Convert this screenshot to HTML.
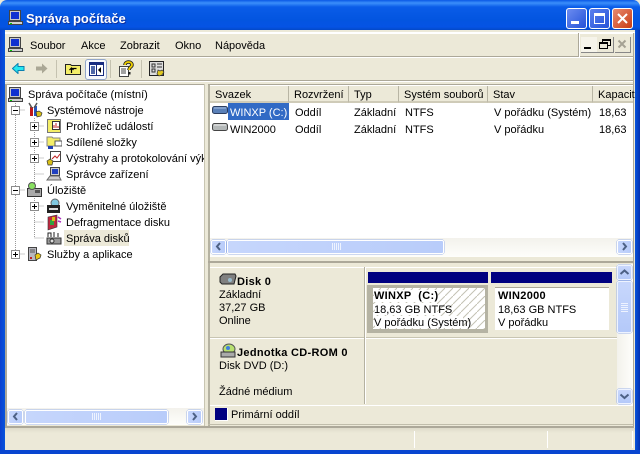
<!DOCTYPE html>
<html><head><meta charset="utf-8"><style>
html,body{margin:0;padding:0;background:#fff}
#w{position:relative;width:640px;height:454px;overflow:hidden;background:#ece9d8;font:11px "Liberation Sans",sans-serif;color:#000}
#w div,#w svg,#w span.t{position:absolute}
.t{white-space:nowrap;line-height:13px;margin-top:1px}
.b{font-weight:bold;letter-spacing:.3px}
.sb{background:linear-gradient(90deg,#c6d6fc,#b8ccfa);border:1px solid #fff;border-radius:2px;box-sizing:border-box;box-shadow:0 0 0 .5px #9db4e8}
.sbv{background:linear-gradient(180deg,#c8d7fc,#b4c9f9);border:1px solid #eef3ff;border-radius:2px;box-sizing:border-box;box-shadow:0 0 0 .5px #9db4e8}
.h{background:#ece9d8;border-bottom:2px solid #cfcbb8;border-right:1px solid #b8b5a4;box-sizing:border-box;height:17px;top:86px}
</style></head><body><div id="w">
<!-- frame -->
<div style="left:0;top:0;width:640px;height:30px;background:linear-gradient(180deg,#0a58e6 0,#3b8ffb 3px,#0a5ce8 7px,#0355e0 20px,#0553e4 27px,#0348c8 30px);border-radius:7px 7px 0 0"></div>
<div style="left:0;top:30px;width:5px;height:424px;background:linear-gradient(90deg,#0a3fd0,#0855dd)"></div>
<div style="left:635px;top:30px;width:5px;height:424px;background:linear-gradient(90deg,#0855dd,#0331b0)"></div>
<div style="left:0;top:450px;width:640px;height:4px;background:#0845d0"></div>
<div style="left:5px;top:32px;width:630px;height:1px;background:#fff"></div>
<!-- title -->
<svg style="left:7px;top:9px" width="16" height="17" viewBox="0 0 16 17"><rect x="2.500" y="1.500" width="11" height="10" fill="#c8c8c8" stroke="#444"/><rect x="4" y="3" width="8" height="7" fill="#1030d0"/><rect x="1.500" y="12.500" width="14" height="3" fill="#d0d0d0" stroke="#444"/><rect x="3" y="14" width="2" height="1" fill="#0c0"/></svg>
<span class="t" style="left:26px;top:11px;color:#fff;font-weight:bold;font-size:13px;text-shadow:1px 1px 0 #0f2fa0">Správa počítače</span>
<!-- window buttons -->
<div style="left:566px;top:8px;width:21px;height:21px;box-sizing:border-box;border:1px solid #fff;border-radius:3px;background:linear-gradient(135deg,#6c8cf0,#2452d8)"></div>
<div style="left:571px;top:21px;width:8px;height:3px;background:#fff"></div>
<div style="left:589px;top:8px;width:21px;height:21px;box-sizing:border-box;border:1px solid #fff;border-radius:3px;background:linear-gradient(135deg,#5c80ee,#2452d8)"></div>
<div style="left:594px;top:13px;width:11px;height:11px;box-sizing:border-box;border:1px solid #fff;border-top:3px solid #fff"></div>
<div style="left:612px;top:8px;width:21px;height:21px;box-sizing:border-box;border:1px solid #fff;border-radius:3px;background:linear-gradient(135deg,#e88a70,#c83c14)"></div>
<svg style="left:612px;top:8px" width="21" height="21"><path d="M6 6l9 9M15 6l-9 9" stroke="#fff" stroke-width="2"/></svg>
<!-- menu -->
<div style="left:5px;top:33px;width:629px;height:1px;background:#fff"></div>
<div style="left:5px;top:56px;width:629px;height:1px;background:#aca899"></div>
<div style="left:5px;top:57px;width:628px;height:1px;background:#fff"></div>
<div style="left:578px;top:33px;width:1px;height:24px;background:#aca899"></div>
<div style="left:579px;top:33px;width:1px;height:24px;background:#fff"></div>
<div style="left:633px;top:33px;width:1px;height:393px;background:#aca899"></div>
<svg style="left:7px;top:36px" width="16" height="17" viewBox="0 0 16 17"><rect x="2.500" y="1.500" width="11" height="10" fill="#c8c8c8" stroke="#444"/><rect x="4" y="3" width="8" height="7" fill="#1030d0"/><rect x="1.500" y="12.500" width="14" height="3" fill="#d0d0d0" stroke="#444"/><rect x="3" y="14" width="2" height="1" fill="#0c0"/></svg>
<span class="t" style="left:30px;top:39px">Soubor</span>
<span class="t" style="left:81px;top:39px">Akce</span>
<span class="t" style="left:120px;top:39px">Zobrazit</span>
<span class="t" style="left:175px;top:39px">Okno</span>
<span class="t" style="left:215px;top:39px">Nápověda</span>
<div style="left:581px;top:37px;width:16px;height:15px;background:#f6f4ea;border-right:1px solid #888;border-bottom:1px solid #888"></div>
<div style="left:584px;top:47px;width:7px;height:2px;background:#000"></div>
<div style="left:597px;top:37px;width:16px;height:15px;background:#ece9d8;border-right:1px solid #888;border-bottom:1px solid #888"></div>
<svg style="left:599px;top:39px" width="13" height="11"><path d="M3.500 3V.5h8v6H8.500M.5 3.500h8v6h-8z" fill="none" stroke="#000"/><path d="M1 4.500h7M4 1.500h7" stroke="#000"/></svg>
<div style="left:615px;top:37px;width:15px;height:15px;background:#ece9d8;border-right:1px solid #888;border-bottom:1px solid #888"></div>
<svg style="left:617px;top:39px" width="11" height="11"><path d="M1.500 1.500l7 7M8.500 1.500l-7 7" stroke="#a5a294" stroke-width="2"/></svg>
<!-- toolbar -->
<svg style="left:12px;top:63px" width="13" height="11"><path d="M.5 5.500L6 .5v3h6v4H6v3z" fill="#26e8f0" stroke="#0a80b0"/></svg>
<svg style="left:35px;top:63px" width="13" height="11"><path d="M12.500 5.500L7 .5v3H1v4h6v3z" fill="#aaa795"/></svg>
<div style="left:56px;top:60px;width:1px;height:18px;background:#c5c2b0"></div>
<svg style="left:64px;top:61px" width="18" height="16"><path d="M1.500 3.500h5l1 1h9v9h-15z" fill="#f4ee68" stroke="#222"/><path d="M7.500 12V8M5.500 9l2-2 2 2M7.500 7.500h5" fill="none" stroke="#000" stroke-width="1.200"/></svg>
<div style="left:85px;top:59px;width:22px;height:21px;box-sizing:border-box;border:1px solid #93a6c8;border-radius:3px;background:#f6f8fc"></div>
<svg style="left:89px;top:62px" width="15" height="14"><rect x=".5" y=".5" width="14" height="13" fill="#fff" stroke="#182c80"/><rect x="1" y="1" width="13" height="2" fill="#182c80"/><rect x="2" y="4" width="4" height="8" fill="#5068a8"/><path d="M7.500 3v10" stroke="#182c80"/><path d="M12 5v6L9 8z" fill="#000"/></svg>
<div style="left:110px;top:60px;width:1px;height:18px;background:#c5c2b0"></div>
<svg style="left:118px;top:60px" width="17" height="18"><path d="M1.500 6.500h9v10h-9z" fill="#fff" stroke="#444"/><path d="M3 9h5M3 11h5M3 13h5" stroke="#444"/><path d="M7 5c0-4 7-4 7 0 0 2-3 2-3 5" fill="none" stroke="#222" stroke-width="3.500"/><path d="M7 5c0-4 7-4 7 0 0 2-3 2-3 5" fill="none" stroke="#f0d000" stroke-width="1.800"/><rect x="10" y="12" width="2.500" height="2.500" fill="#222"/></svg>
<div style="left:141px;top:60px;width:1px;height:18px;background:#c5c2b0"></div>
<svg style="left:149px;top:61px" width="17" height="16"><rect x=".5" y=".5" width="14" height="14" fill="#ddd" stroke="#222"/><path d="M3 3h3v3H3zM8 3h5M3 8h3v3H3zM8 6h5" fill="none" stroke="#333"/><path d="M9 9l2 1 2-1 2 2-2 3-3 1-2-2z" fill="#e0c820" stroke="#333" stroke-width=".7"/></svg>
<div style="left:5px;top:80px;width:629px;height:1px;background:#aca899"></div>
<div style="left:5px;top:81px;width:628px;height:1px;background:#fff"></div>
<!-- panes -->
<div style="left:5px;top:84px;width:2px;height:342px;background:#aca899"></div>
<div style="left:5px;top:84px;width:200px;height:1px;background:#aca899"></div>
<div style="left:7px;top:85px;width:197px;height:340px;background:#fff"></div>
<div style="left:204px;top:84px;width:1px;height:342px;background:#c8c5b2"></div>
<div style="left:208px;top:84px;width:2px;height:342px;background:#b5b2a1"></div>
<div style="left:208px;top:84px;width:425px;height:1px;background:#aca899"></div>
<div style="left:210px;top:85px;width:423px;height:174px;background:#fff"></div>
<!-- tree -->
<svg style="left:7px;top:86px" width="16" height="17" viewBox="0 0 16 17"><rect x="2.500" y="1.500" width="11" height="10" fill="#c8c8c8" stroke="#444"/><rect x="4" y="3" width="8" height="7" fill="#1030d0"/><rect x="1.500" y="12.500" width="14" height="3" fill="#d0d0d0" stroke="#444"/><rect x="3" y="14" width="2" height="1" fill="#0c0"/></svg>
<span class="t" style="left:28px;top:88px">Správa počítače (místní)</span>
<svg style="left:8px;top:100px" width="60" height="165" stroke="#999" stroke-dasharray="1 1" fill="none"><path d="M7.500 3v154M7.500 10h10M7.500 90h10M7.500 154h10M26.500 18v120M26.500 26h10M26.500 42h10M26.500 58h10M26.500 74h10M26.500 106h10M26.500 122h10M26.500 138h10M26.500 98v40"/></svg>
<!-- expanders -->
<div style="left:11px;top:106px;width:9px;height:9px;box-sizing:border-box;border:1px solid #8c8c8c;background:#fff"></div><div style="left:13px;top:110px;width:5px;height:1px;background:#000"></div>
<div style="left:30px;top:122px;width:9px;height:9px;box-sizing:border-box;border:1px solid #8c8c8c;background:#fff"></div><div style="left:32px;top:126px;width:5px;height:1px;background:#000"></div><div style="left:34px;top:124px;width:1px;height:5px;background:#000"></div>
<div style="left:30px;top:138px;width:9px;height:9px;box-sizing:border-box;border:1px solid #8c8c8c;background:#fff"></div><div style="left:32px;top:142px;width:5px;height:1px;background:#000"></div><div style="left:34px;top:140px;width:1px;height:5px;background:#000"></div>
<div style="left:30px;top:154px;width:9px;height:9px;box-sizing:border-box;border:1px solid #8c8c8c;background:#fff"></div><div style="left:32px;top:158px;width:5px;height:1px;background:#000"></div><div style="left:34px;top:156px;width:1px;height:5px;background:#000"></div>
<div style="left:11px;top:186px;width:9px;height:9px;box-sizing:border-box;border:1px solid #8c8c8c;background:#fff"></div><div style="left:13px;top:190px;width:5px;height:1px;background:#000"></div>
<div style="left:30px;top:202px;width:9px;height:9px;box-sizing:border-box;border:1px solid #8c8c8c;background:#fff"></div><div style="left:32px;top:206px;width:5px;height:1px;background:#000"></div><div style="left:34px;top:204px;width:1px;height:5px;background:#000"></div>
<div style="left:11px;top:250px;width:9px;height:9px;box-sizing:border-box;border:1px solid #8c8c8c;background:#fff"></div><div style="left:13px;top:254px;width:5px;height:1px;background:#000"></div><div style="left:15px;top:252px;width:1px;height:5px;background:#000"></div>
<!-- tree icons -->
<svg style="left:26px;top:102px" width="17" height="16"><rect x="4" y="5" width="3" height="9" fill="#c01818"/><rect x="8" y="4" width="3" height="10" fill="#2858c0"/><path d="M3 1l3 5M11 1L8 6" stroke="#555" stroke-width="1.500"/><path d="M10 10l3-1 3 2-1 3-4 1z" fill="#d8c018" stroke="#333" stroke-width=".7"/></svg>
<svg style="left:46px;top:118px" width="16" height="16"><rect x="1.500" y="1.500" width="13" height="13" fill="#f4ee68" stroke="#777"/><rect x="6.500" y="3.500" width="7" height="8" fill="#fff" stroke="#333"/><path d="M8 10V7M10 10V5M12 10V8" stroke="#c02020"/></svg>
<svg style="left:46px;top:134px" width="16" height="16"><path d="M1 3h5l1 1h7v8H1z" fill="#f4ee68" stroke="#888"/><rect x="9" y="7" width="7" height="5" fill="#fff" stroke="#555"/><path d="M2 12h5v3H2z" fill="#2040b0"/></svg>
<svg style="left:46px;top:150px" width="16" height="16"><rect x="4.500" y="1.500" width="10" height="10" fill="#fff" stroke="#444"/><path d="M6 9l3-3 2 2 3-4" fill="none" stroke="#c02020"/><path d="M1 11l3-2 3 2-1 4H2z" fill="#d8c018" stroke="#333" stroke-width=".7"/></svg>
<svg style="left:46px;top:166px" width="16" height="16"><rect x="4.500" y="1.500" width="9" height="8" fill="#ccc" stroke="#444"/><rect x="6" y="3" width="6" height="5" fill="#2040c0"/><path d="M1 14l3-4h9l2 4z" fill="#ccc" stroke="#666"/></svg>
<svg style="left:26px;top:182px" width="17" height="16"><rect x="1.500" y="6.500" width="14" height="8" fill="#aaa" stroke="#333"/><circle cx="6" cy="4" r="3.500" fill="#88e060" stroke="#555"/><rect x="9" y="8" width="5" height="3" fill="#555"/></svg>
<svg style="left:46px;top:198px" width="16" height="16"><circle cx="9" cy="5" r="4" fill="#80c8e0" stroke="#666"/><rect x="1" y="7" width="13" height="8" fill="#222"/><rect x="3" y="10" width="9" height="2" fill="#ddd"/></svg>
<svg style="left:46px;top:214px" width="16" height="17"><path d="M2 3l9-2v12l-9 3z" fill="#c02840" stroke="#333" stroke-width=".6"/><rect x="4" y="6" width="4" height="5" fill="#30a040"/><rect x="6" y="3" width="3" height="4" fill="#d8c018"/><path d="M12 3l3 2M12 7l3 1" stroke="#b030c0" stroke-width="1.500"/></svg>
<svg style="left:46px;top:230px" width="16" height="16"><rect x="1" y="8" width="14" height="6" fill="#999" stroke="#333"/><path d="M2 7V3h3v4M8 7V2M12 7V3" fill="none" stroke="#222"/><circle cx="6" cy="11" r="2" fill="#ddd" stroke="#333"/></svg>
<svg style="left:26px;top:246px" width="17" height="16"><rect x="2.500" y="1.500" width="8" height="13" fill="#b8b8c0" stroke="#444"/><path d="M4 4h5M4 6h5" stroke="#555"/><rect x="4" y="11" width="2" height="2" fill="#c02020"/><path d="M9 9l3-2 3 2-1 3-4 2z" fill="#e8c818" stroke="#333" stroke-width=".7"/></svg>
<!-- tree text -->
<span class="t" style="left:47px;top:104px">Systémové nástroje</span>
<span class="t" style="left:66px;top:120px">Prohlížeč událostí</span>
<span class="t" style="left:66px;top:136px">Sdílené složky</span>
<div style="left:66px;top:152px;width:138px;height:16px;overflow:hidden"><span class="t" style="left:0;top:0">Výstrahy a protokolování výkonu</span></div>
<span class="t" style="left:66px;top:168px">Správce zařízení</span>
<span class="t" style="left:47px;top:184px">Úložiště</span>
<span class="t" style="left:66px;top:200px">Vyměnitelné úložiště</span>
<span class="t" style="left:66px;top:216px">Defragmentace disku</span>
<div style="left:64px;top:230px;width:65px;height:16px;background:#ece9d8"></div>
<span class="t" style="left:66px;top:232px">Správa disků</span>
<span class="t" style="left:47px;top:248px">Služby a aplikace</span>
<!-- tree hscroll -->
<div style="left:7px;top:408px;width:197px;height:17px;background:linear-gradient(180deg,#f3f2ec,#fefefb)"></div>
<div class="sb" style="left:8px;top:410px;width:15px;height:14px"></div>
<svg style="left:8px;top:409px" width="15" height="15"><path d="M9 4L6 7.500l3 3.500" fill="none" stroke="#4d6185" stroke-width="2"/></svg>
<div class="sb" style="left:25px;top:410px;width:143px;height:14px"></div>
<svg style="left:92px;top:413px" width="9" height="7"><path d="M.5 0v7M2.500 0v7M4.500 0v7M6.500 0v7M8.500 0v7" stroke="#eef3ff"/></svg>
<div class="sb" style="left:187px;top:410px;width:15px;height:14px"></div>
<svg style="left:187px;top:409px" width="15" height="15"><path d="M6 4l3 3.500L6 11" fill="none" stroke="#4d6185" stroke-width="2"/></svg>
<!-- list header -->
<div class="h" style="left:210px;width:79px"></div>
<div class="h" style="left:289px;width:60px"></div>
<div class="h" style="left:349px;width:50px"></div>
<div class="h" style="left:399px;width:89px"></div>
<div class="h" style="left:488px;width:105px"></div>
<div class="h" style="left:593px;width:40px;border-right:0"></div>
<span class="t" style="left:215px;top:88px">Svazek</span>
<span class="t" style="left:294px;top:88px">Rozvržení</span>
<span class="t" style="left:354px;top:88px">Typ</span>
<span class="t" style="left:404px;top:88px">Systém souborů</span>
<span class="t" style="left:493px;top:88px">Stav</span>
<span class="t" style="left:598px;top:88px">Kapacit</span>
<!-- rows -->
<svg style="left:212px;top:104px" width="16" height="13"><rect x=".5" y="2.500" width="15" height="7" rx="2" fill="#5a80b8" stroke="#2c3e60"/><path d="M2 4h12" stroke="#a8c0e0"/></svg>
<svg style="left:212px;top:121px" width="16" height="13"><rect x=".5" y="2.500" width="15" height="7" rx="2" fill="#b4b8b8" stroke="#444"/><path d="M2 4h12" stroke="#eee"/></svg>
<div style="left:228px;top:103px;width:61px;height:17px;background:#316ac5"></div>
<span class="t" style="left:230px;top:106px;color:#fff">WINXP (C:)</span>
<span class="t" style="left:230px;top:123px">WIN2000</span>
<span class="t" style="left:295px;top:106px">Oddíl</span><span class="t" style="left:295px;top:123px">Oddíl</span>
<span class="t" style="left:354px;top:106px">Základní</span><span class="t" style="left:354px;top:123px">Základní</span>
<span class="t" style="left:405px;top:106px">NTFS</span><span class="t" style="left:405px;top:123px">NTFS</span>
<span class="t" style="left:494px;top:106px">V pořádku (Systém)</span><span class="t" style="left:494px;top:123px">V pořádku</span>
<span class="t" style="left:599px;top:106px">18,63</span><span class="t" style="left:599px;top:123px">18,63</span>
<!-- list hscroll -->
<div style="left:210px;top:238px;width:423px;height:19px;background:linear-gradient(180deg,#f3f2ec,#fefefb)"></div>
<div class="sb" style="left:211px;top:240px;width:15px;height:14px"></div>
<svg style="left:211px;top:239px" width="15" height="15"><path d="M9 4L6 7.500l3 3.500" fill="none" stroke="#4d6185" stroke-width="2"/></svg>
<div class="sb" style="left:227px;top:240px;width:217px;height:14px"></div>
<svg style="left:332px;top:243px" width="9" height="7"><path d="M.5 0v7M2.500 0v7M4.500 0v7M6.500 0v7M8.500 0v7" stroke="#eef3ff"/></svg>
<div class="sb" style="left:617px;top:240px;width:15px;height:14px"></div>
<svg style="left:617px;top:239px" width="15" height="15"><path d="M6 4l3 3.500L6 11" fill="none" stroke="#4d6185" stroke-width="2"/></svg>
<div style="left:210px;top:257px;width:423px;height:4px;background:#ece9d8"></div>
<div style="left:208px;top:261px;width:425px;height:2px;background:#aca899"></div>
<!-- disk pane -->
<div style="left:210px;top:263px;width:423px;height:162px;background:#ece9d8"></div>
<div style="left:210px;top:267px;width:407px;height:1px;background:#fff"></div>
<div style="left:210px;top:337px;width:407px;height:1px;background:#c8c5b2"></div>
<div style="left:210px;top:338px;width:407px;height:1px;background:#fff"></div>
<div style="left:364px;top:267px;width:1px;height:137px;background:#b4b1a0"></div>
<div style="left:365px;top:267px;width:1px;height:137px;background:#fff"></div>
<svg style="left:219px;top:273px" width="18" height="13"><path d="M1 4l3-3h12l1 2-2 8H3L1 9z" fill="#808080" stroke="#222"/><circle cx="11" cy="7" r="2" fill="#9bc"/></svg>
<span class="t b" style="left:237px;top:275px">Disk 0</span>
<span class="t" style="left:219px;top:288px">Základní</span>
<span class="t" style="left:219px;top:301px">37,27 GB</span>
<span class="t" style="left:219px;top:314px">Online</span>
<svg style="left:220px;top:343px" width="17" height="15"><ellipse cx="9" cy="6" rx="6" ry="5" fill="#b8e070" stroke="#555"/><circle cx="8" cy="5" r="2" fill="#4080e0"/><rect x="1" y="9" width="14" height="5" fill="#aaa" stroke="#333"/></svg>
<span class="t b" style="left:237px;top:346px">Jednotka CD-ROM 0</span>
<span class="t" style="left:219px;top:359px">Disk DVD (D:)</span>
<span class="t" style="left:219px;top:385px">Žádné médium</span>
<!-- partitions -->
<div style="left:368px;top:272px;width:120px;height:11px;background:#000080"></div>
<div style="left:491px;top:272px;width:121px;height:11px;background:#000080"></div>
<div style="left:367px;top:285px;width:121px;height:48px;background:#b5b3a3"></div>
<svg style="left:373px;top:288px" width="112" height="41"><defs><pattern id="p" width="8" height="8" patternUnits="userSpaceOnUse"><path d="M-1 9L9-1" stroke="#c4c2b4"/></pattern></defs><rect width="112" height="41" fill="#fff"/><rect width="112" height="41" fill="url(#p)"/></svg>
<div style="left:374px;top:290px;width:64px;height:12px;background:#fff"></div>
<div style="left:375px;top:303px;width:62px;height:12px;background:#fff"></div>
<div style="left:375px;top:316px;width:88px;height:12px;background:#fff"></div>
<span class="t b" style="left:374px;top:289px">WINXP&nbsp; (C:)</span>
<span class="t" style="left:374px;top:303px">18,63 GB NTFS</span>
<span class="t" style="left:374px;top:316px">V pořádku (Systém)</span>
<div style="left:491px;top:284px;width:122px;height:50px;background:#ece9d8"></div>
<div style="left:495px;top:287px;width:114px;height:43px;background:#fff;border-top:1px solid #aca899;box-sizing:border-box"></div>
<span class="t b" style="left:498px;top:289px">WIN2000</span>
<span class="t" style="left:498px;top:303px">18,63 GB NTFS</span>
<span class="t" style="left:498px;top:316px">V pořádku</span>
<!-- vscroll -->
<div style="left:617px;top:264px;width:16px;height:141px;background:linear-gradient(90deg,#f3f2ec,#fefefb)"></div>
<div class="sbv" style="left:617px;top:265px;width:15px;height:15px"></div>
<svg style="left:617px;top:265px" width="15" height="15"><path d="M3.500 9L7.500 5.500 11.500 9" fill="none" stroke="#4d6185" stroke-width="2"/></svg>
<div class="sbv" style="left:617px;top:281px;width:15px;height:52px"></div>
<svg style="left:621px;top:303px" width="7" height="9"><path d="M0 .5h7M0 2.500h7M0 4.500h7M0 6.500h7M0 8.500h7" stroke="#eef3ff"/></svg>
<div class="sbv" style="left:617px;top:389px;width:15px;height:15px"></div>
<svg style="left:617px;top:389px" width="15" height="15"><path d="M3.500 5.500L7.500 9 11.500 5.500" fill="none" stroke="#4d6185" stroke-width="2"/></svg>
<!-- legend -->
<div style="left:210px;top:405px;width:423px;height:1px;background:#fff"></div>
<div style="left:215px;top:408px;width:13px;height:13px;box-sizing:border-box;background:#000080;border-right:1px solid #fff;border-bottom:1px solid #fff"></div>
<span class="t" style="left:231px;top:408px">Primární oddíl</span>
<!-- bottom -->
<div style="left:208px;top:424px;width:425px;height:1px;background:#c0bdab"></div>
<div style="left:5px;top:426px;width:629px;height:2px;background:#aca899"></div>
<div style="left:5px;top:428px;width:630px;height:22px;background:linear-gradient(180deg,#dedbca,#ece9d8 5px,#ece9d8)"></div>
<div style="left:414px;top:431px;width:1px;height:17px;background:#fff"></div>
<div style="left:547px;top:431px;width:1px;height:17px;background:#fff"></div>
<div style="left:632px;top:431px;width:1px;height:17px;background:#fff"></div>
</div></body></html>
